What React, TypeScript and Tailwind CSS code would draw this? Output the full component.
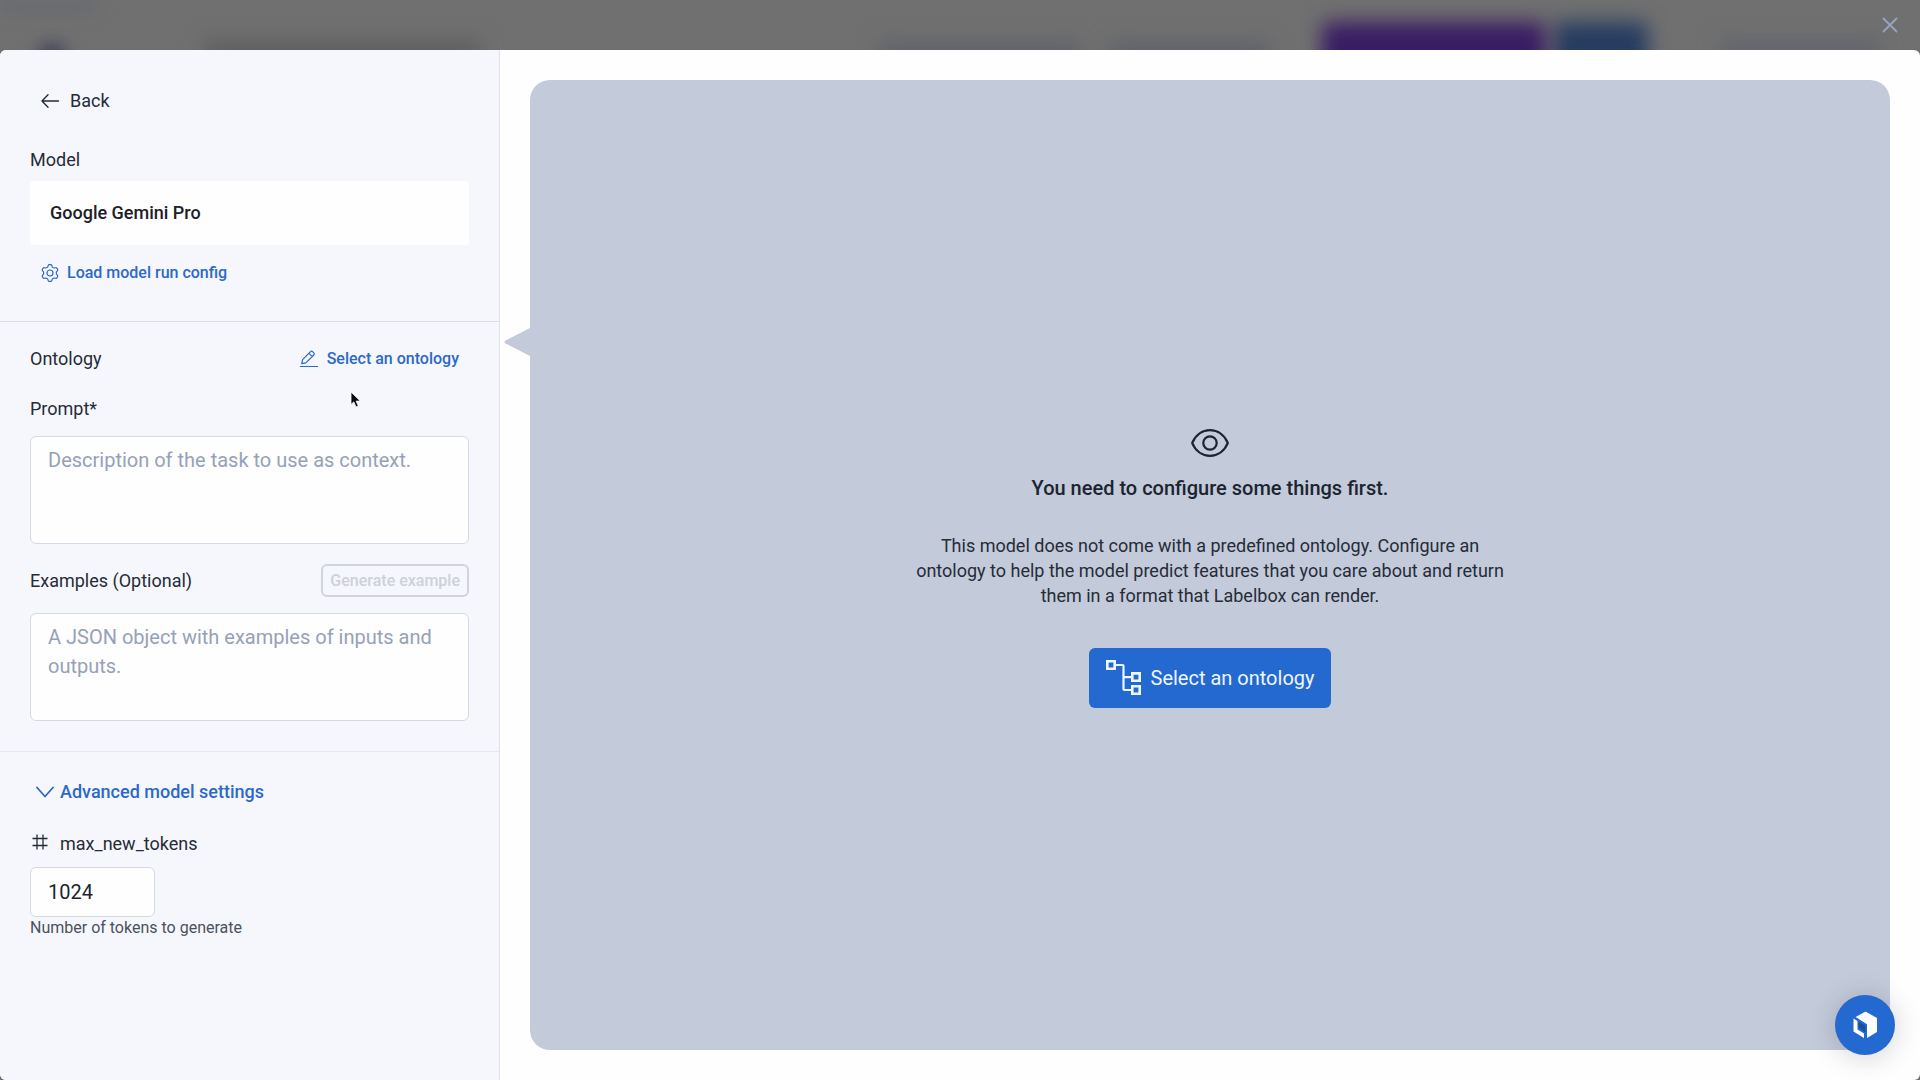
import { useState } from "react";

// Six rounded teeth around a 20px box
const gearPath =
  Array.from({ length: 72 }, (_, i) => {
    const a = (i / 72) * Math.PI * 2 - Math.PI / 2;
    const r = 7.4 + 1.1 * Math.tanh(2 * Math.cos((i / 72) * Math.PI * 12));
    return `${i ? "L" : "M"}${(10 + r * Math.cos(a)).toFixed(2)} ${(10 + r * Math.sin(a)).toFixed(2)}`;
  }).join("") + "Z";

function ArrowLeft() {
  return (
    <svg className="w-5 h-5" viewBox="0 0 20 20" fill="none" stroke="currentColor" strokeWidth="1.4" strokeLinecap="round" strokeLinejoin="round">
      <path d="M18.500 10H2M8 3.800 2 10l6 6.200" />
    </svg>
  );
}

function Gear() {
  return (
    <svg className="w-5 h-5" viewBox="0 0 20 20" fill="none" stroke="currentColor" strokeWidth="1.2" strokeLinejoin="round">
      <path d={gearPath} />
      <circle cx="10" cy="10" r="3" />
    </svg>
  );
}

function Pencil() {
  return (
    <svg className="w-[18px] h-[18px]" viewBox="0 0 18 18" fill="none" stroke="currentColor" strokeWidth="1.2" strokeLinejoin="round">
      <path d="M1.800 13.600l.8-3.900L10.500 1.700c.6-.6 1.500-.6 2.100 0l1.200 1.200c.6.6.6 1.500 0 2.100L5.800 12.900l-4 .7ZM9 3.300l3.300 3.300M0 16.500h18" />
    </svg>
  );
}

function Chevron() {
  return (
    <svg className="w-[18px] h-3" viewBox="0 0 18 12" fill="none" stroke="currentColor" strokeWidth="1.800" strokeLinecap="round" strokeLinejoin="round">
      <path d="M1 1.500l8 9 8-9" />
    </svg>
  );
}

function Hash() {
  return (
    <svg className="w-4 h-[22px]" viewBox="0 0 16 16" fill="none" stroke="currentColor" strokeWidth="1.300">
      <path d="M.5 4.500h15M.5 11.500h15M5 .5v15M11 .5v15" />
    </svg>
  );
}

function Eye() {
  return (
    <svg className="w-[38px] h-[28px]" viewBox="0 0 38 28" fill="none" stroke="currentColor" strokeWidth="2.200">
      <path d="M1.200 14C4.500 6 11.200 1.200 19 1.200S33.500 6 36.800 14C33.500 22 26.800 26.800 19 26.800S4.500 22 1.200 14Z" strokeLinejoin="round" />
      <circle cx="19" cy="14" r="6.700" />
    </svg>
  );
}

function Tree() {
  return (
    <svg className="w-[35px] h-[35px]" viewBox="0 0 35 35" fill="none" stroke="currentColor" strokeWidth="2.600">
      <path d="M1.300 1.300h7.400v7.400H1.300ZM26.300 13.400h7.400v7.400h-7.400ZM26.300 26.300h7.400v7.400h-7.400Z" />
      <path d="M8.700 5H16.500q1 0 1 1V29q0 1 1 1H26.300M17.500 17.200h9" strokeWidth="2.200" />
    </svg>
  );
}

function Cube() {
  return (
    <svg className="w-6 h-7" viewBox="0 0 24 28" fill="currentColor">
      <path d="M12.500.5 24 7v14l-10 6V13.300L2.700 6Z" />
      <path d="M.5 7.500 4.500 10v8.500l6.500 4V27L.5 20.500Z" />
      <path d="M5.500 10.500 12.500 15v6.300L10 20l-4.500-3.500Z" fill="#1d4f9f" />
    </svg>
  );
}

// Blurred remains of the page that sits behind the dialog
function Backdrop() {
  return (
    <div className="absolute inset-0 overflow-hidden bg-[#707070]">
      <div className="absolute left-0 top-0 w-24 h-3 bg-[#666a70] blur-[8px]" />
      <div className="absolute left-[38px] top-[42px] w-7 h-8 rounded-full bg-[#45455c] blur-[8px]" />
      <div className="absolute left-[205px] top-[40px] w-[275px] h-10 bg-[#5f5f61] blur-[10px]" />
      <div className="absolute right-[840px] top-[42px] w-[200px] h-8 bg-[#60626b] blur-[10px]" />
      <div className="absolute right-[650px] top-[42px] w-[160px] h-8 bg-[#60626b] blur-[10px]" />
      <div className="absolute right-[272px] top-[22px] w-[94px] h-16 rounded-lg bg-[#263c60] blur-[10px]" />
      <div className="absolute right-[374px] top-[22px] w-[224px] h-16 rounded-lg bg-[#391d63] blur-[10px]" />
      <div className="absolute right-[40px] top-[40px] w-[160px] h-8 bg-[#62656d] blur-[10px]" />
    </div>
  );
}

const fieldClass =
  "block w-full rounded-md border border-[#d5d9e3] bg-[#fefefe] px-[17px] text-xl text-[#1b2430] placeholder:text-[#96a1b8] outline-none";

export default function App() {
  const [prompt, setPrompt] = useState("");
  const [examples, setExamples] = useState("");
  const [maxTokens, setMaxTokens] = useState("1024");

  return (
    <div className="relative min-h-screen flex flex-col bg-[#707070] font-['Roboto',sans-serif] text-lg leading-[26px] text-[#252c38]">
      <Backdrop />

      <header className="relative h-[50px] flex items-center justify-end pr-[22px]">
        <button aria-label="Close" className="w-4 h-4 text-[#97a5bf]">
          <svg viewBox="0 0 16 16" fill="none" stroke="currentColor" strokeWidth="1.800" strokeLinecap="round">
            <path d="M1.500 1.500l13 13M14.500 1.500l-13 13" />
          </svg>
        </button>
      </header>

      <div role="dialog" aria-label="Model settings" className="relative flex-1 flex rounded-md overflow-hidden bg-[#fefefe]">
        <aside className="w-[500px] shrink-0 border-r border-[#dfe3ec] bg-[#f6f7fc]">
          <section className="px-[30px] pt-[31px] pb-8 border-b border-[#d9dce5]">
            <button className="h-10 px-2.5 flex items-center gap-2.5">
              <ArrowLeft />
              Back
            </button>
            <h2 className="mt-[26px]">Model</h2>
            <div className="mt-2 h-16 px-5 flex items-center rounded bg-[#fefefe] font-medium text-[#1b2026]">
              Google Gemini Pro
            </div>
            <button className="mt-3 h-8 px-2.5 flex items-center gap-[7px] text-base font-medium text-[#2c69c9]">
              <Gear />
              Load model run config
            </button>
          </section>

          <section className="px-[30px] pt-[21px] pb-[30px] border-b border-[#e4e7ef]">
            <div className="flex items-center justify-between">
              <h2>Ontology</h2>
              <button className="h-8 px-2.5 flex items-center gap-[9px] text-base font-medium text-[#2c69c9]">
                <Pencil />
                Select an ontology
              </button>
            </div>
            <label htmlFor="prompt" className="block mt-[21px]">Prompt*</label>
            <textarea
              id="prompt"
              value={prompt}
              onChange={(e) => setPrompt(e.target.value)}
              placeholder="Description of the task to use as context."
              className={`${fieldClass} mt-3.5 h-[108px] py-[9px] leading-[29px] resize-none`}
            />
            <div className="mt-5 flex items-center justify-between">
              <label htmlFor="examples">Examples (Optional)</label>
              <button disabled className="h-[33px] px-[7px] rounded-md border-2 border-[#d0d4dd] text-base leading-none font-medium text-[#cdd1da]">
                Generate example
              </button>
            </div>
            <textarea
              id="examples"
              value={examples}
              onChange={(e) => setExamples(e.target.value)}
              placeholder="A JSON object with examples of inputs and outputs."
              className={`${fieldClass} mt-4 h-[108px] py-[9px] leading-[29px] resize-none`}
            />
          </section>

          <section className="px-[30px] pt-[27px]">
            <button className="px-1.5 flex items-center gap-1.5 font-medium text-[#2c69c9]">
              <Chevron />
              Advanced model settings
            </button>
            <label htmlFor="max-tokens" className="mt-[26px] px-0.5 flex items-start gap-3">
              <Hash />
              max_new_tokens
            </label>
            <div className="mt-2.5 w-[125px]">
              <input
                id="max-tokens"
                value={maxTokens}
                onChange={(e) => setMaxTokens(e.target.value)}
                className={`${fieldClass} h-[50px]`}
              />
            </div>
            <p className="text-base leading-[22px] text-[#4b515e]">Number of tokens to generate</p>
          </section>
        </aside>

        <main className="flex-1 flex p-[30px]">
          <div className="relative flex-1 pt-1.5 rounded-[20px] flex flex-col items-center justify-center bg-[#c3cad9] text-center">
            {/* Pointer towards the ontology row */}
            <svg className="absolute right-full top-[248px] w-[26px] h-7 text-[#c3cad9]" viewBox="0 0 26 28" fill="currentColor">
              <path d="M26 0v28L1.500 15.500q-2-1.500 0-3Z" />
            </svg>

            <span className="text-[#1b2430]">
              <Eye />
            </span>
            <h1 className="mt-4 text-xl leading-[30px] font-medium text-[#1b2430]">
              You need to configure some things first.
            </h1>
            <p className="mt-[30px] max-w-[600px] leading-[25px]">
              This model does not come with a predefined ontology. Configure an ontology to help the
              model predict features that you care about and return them in a format that Labelbox can
              render.
            </p>
            <button className="mt-10 h-[60px] px-[17px] flex items-center gap-2.5 rounded-md bg-[#2369cf] text-xl text-[#eef6ff]">
              <Tree />
              Select an ontology
            </button>
          </div>
        </main>
      </div>

      <button
        aria-label="Open help"
        className="absolute right-[25px] bottom-[25px] w-[60px] h-[60px] rounded-full flex items-center justify-center bg-[#2369cf] text-white shadow-[0_2px_28px_rgba(0,0,0,0.18)]"
      >
        <Cube />
      </button>

      {/* Mouse cursor */}
      <svg className="absolute left-[350px] top-[391px] w-3 h-[18px]" viewBox="0 0 12 18">
        <path d="M1 1v12.500l2.800-2.600 2.200 5 2.300-1-2.200-4.800h4.200Z" fill="#0b0b0f" stroke="#fff" strokeWidth=".8" />
      </svg>
    </div>
  );
}
